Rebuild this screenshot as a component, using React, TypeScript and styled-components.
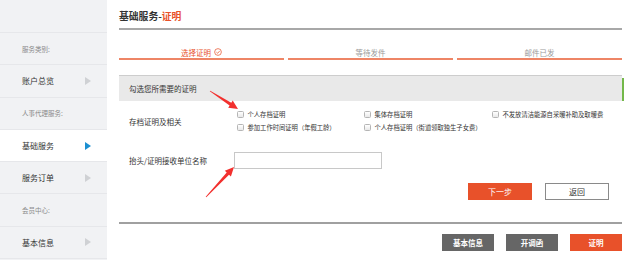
import React from "react";
import styled, { createGlobalStyle } from "styled-components";

const Global = createGlobalStyle`
  html, body { margin: 0; padding: 0; background: #fff; }
  body { font-family: "Noto Sans CJK SC", "Noto Sans", sans-serif; color: #333; }
  * { box-sizing: border-box; }
`;

const Page = styled.div`
  display: flex;
  width: 624px;
  height: 260px;
  overflow: hidden;
  position: relative;
`;

const Sidebar = styled.nav`
  width: 107px;
  flex: none;
  background: #f1f2f4;
  display: flex;
  flex-direction: column;
`;

const SideTop = styled.div`
  height: 33px;
  border-bottom: 1px solid #e6e7ea;
`;

const SideRow = styled.div<{ $active?: boolean; $section?: boolean }>`
  height: 32.3px;
  display: flex;
  align-items: center;
  justify-content: space-between;
  padding: 0 16px 0 22px;
  border-bottom: 1px solid #e6e7ea;
  background: ${(p) => (p.$active ? "#fff" : "transparent")};
  font-size: ${(p) => (p.$section ? "6.5px" : "8px")};
  color: ${(p) => (p.$section ? "#8a8a8a" : "#333")};
`;

const Tri = styled.span<{ $active?: boolean }>`
  width: 0;
  height: 0;
  border-top: 4px solid transparent;
  border-bottom: 4px solid transparent;
  border-left: 6px solid ${(p) => (p.$active ? "#1b8fd1" : "#cfd1d4")};
`;

const Main = styled.main`
  flex: 1;
  padding: 0 2px 0 12px;
  display: flex;
  flex-direction: column;
`;

const Header = styled.div`
  height: 30px;
  border-bottom: 2px solid #a8a8a8;
  display: flex;
  align-items: center;
  padding-top: 4px;
`;

const Title = styled.h1`
  margin: 0;
  font-size: 9.8px;
  font-weight: 700;
  color: #333;
  span { color: #e8512a; }
`;

const Steps = styled.div`
  display: grid;
  grid-template-columns: repeat(3, 1fr);
  column-gap: 4px;
  margin-top: 16px;
`;

const Step = styled.div<{ $active?: boolean }>`
  height: 14px;
  border-bottom: 2px solid #ee8566;
  display: flex;
  justify-content: center;
  align-items: center;
  gap: 3px;
  font-size: 7.5px;
  color: ${(p) => (p.$active ? "#e8512a" : "#9a9a9a")};
`;

const Check = styled.svg`
  width: 8px;
  height: 8px;
`;

const Bar = styled.div`
  margin-top: 15px;
  height: 26px;
  background: #e9e9e9;
  border-top: 1px solid #cdcdcd;
  display: flex;
  align-items: center;
  padding-left: 10px;
  font-size: 7.5px;
  color: #333;
  position: relative;
`;

const GreenEdge = styled.div`
  position: absolute;
  right: -2px;
  top: 2px;
  bottom: 0;
  width: 2px;
  background: #73b84a;
`;

const Form = styled.div`
  display: grid;
  grid-template-columns: 105px 1fr;
  padding-left: 10px;
  margin-top: 9px;
  row-gap: 20px;
  align-items: center;
`;

const Label = styled.div`
  font-size: 7.5px;
  color: #333;
`;

const Options = styled.div`
  display: grid;
  grid-template-columns: 127px 128px 1fr;
  row-gap: 4px;
  padding-left: 3px;
`;

const Opt = styled.label`
  display: flex;
  align-items: center;
  gap: 2px;
  font-size: 6.3px;
  color: #333;
  height: 9px;
  white-space: nowrap;
`;

const Box = styled.span`
  width: 7px;
  height: 7px;
  border: 1px solid #b5b5b5;
  border-radius: 1.5px;
  background: linear-gradient(#fff, #e9e9e9);
  flex: none;
  margin-right: 1.5px;
`;

const Input = styled.div`
  width: 148px;
  height: 17px;
  border: 1px solid #c8c8c8;
  background: #fff;
`;

const Actions = styled.div`
  display: flex;
  justify-content: flex-end;
  gap: 13px;
  margin-top: 14px;
  padding-right: 13px;
`;

const Btn = styled.button<{ $kind: "primary" | "outline" | "dark" }>`
  height: 17px;
  padding: 0;
  font-family: inherit;
  font-size: 8px;
  border: 1px solid
    ${(p) => (p.$kind === "primary" ? "#e8512a" : p.$kind === "dark" ? "#666" : "#8a8a8a")};
  background: ${(p) => (p.$kind === "primary" ? "#e8512a" : p.$kind === "dark" ? "#666" : "#fff")};
  color: ${(p) => (p.$kind === "outline" ? "#333" : "#fff")};
  display: flex;
  align-items: center;
  justify-content: center;
`;

const WideBtn = styled(Btn)`
  width: 64px;
`;

const FootBtn = styled(Btn)`
  width: 52px;
  font-size: 7.5px;
  font-weight: 700;
`;

const Footer = styled.div`
  margin-top: 22px;
  border-top: 2px solid #a0a0a0;
  display: flex;
  justify-content: flex-end;
  gap: 12px;
  padding-top: 10px;
`;

const Overlay = styled.svg`
  position: absolute;
  left: 0;
  top: 0;
  width: 624px;
  height: 260px;
  pointer-events: none;
`;

function arrow(tx: number, ty: number, hx: number, hy: number) {
  const dx = hx - tx;
  const dy = hy - ty;
  const L = Math.hypot(dx, dy);
  const ux = dx / L;
  const uy = dy / L;
  const nx = -uy;
  const ny = ux;
  const bx = hx - ux * 9;
  const by = hy - uy * 9;
  const pts: [number, number][] = [
    [tx + nx * 0.4, ty + ny * 0.4],
    [bx + nx * 1.6, by + ny * 1.6],
    [bx + nx * 4.2, by + ny * 4.2],
    [hx, hy],
    [bx - nx * 4.2, by - ny * 4.2],
    [bx - nx * 1.6, by - ny * 1.6],
    [tx - nx * 0.4, ty - ny * 0.4],
  ];
  return pts.map((p) => p.map((v) => v.toFixed(1)).join(",")).join(" ");
}

export default function App() {
  return (
    <Page>
      <Global />
      <Sidebar>
        <SideTop />
        <SideRow $section>服务类别:</SideRow>
        <SideRow>
          账户总览<Tri />
        </SideRow>
        <SideRow $section>人事代理服务:</SideRow>
        <SideRow $active>
          基础服务<Tri $active />
        </SideRow>
        <SideRow>
          服务订单<Tri />
        </SideRow>
        <SideRow $section>会员中心:</SideRow>
        <SideRow>
          基本信息<Tri />
        </SideRow>
      </Sidebar>
      <Main>
        <Header>
          <Title>
            基础服务-<span>证明</span>
          </Title>
        </Header>
        <Steps>
          <Step $active>
            选择证明
            <Check viewBox="0 0 10 10">
              <circle cx="5" cy="5" r="4.2" fill="none" stroke="#e8512a" strokeWidth="0.9" />
              <path d="M3 5.2 L4.6 6.6 L7.2 3.6" fill="none" stroke="#e8512a" strokeWidth="0.9" />
            </Check>
          </Step>
          <Step>等待发件</Step>
          <Step>邮件已发</Step>
        </Steps>
        <Bar>
          勾选您所需要的证明
          <GreenEdge />
        </Bar>
        <Form>
          <Label>存档证明及相关</Label>
          <Options>
            <Opt>
              <Box />
              个人存档证明
            </Opt>
            <Opt>
              <Box />
              集体存档证明
            </Opt>
            <Opt>
              <Box />
              不发放清洁能源自采暖补助及取暖费
            </Opt>
            <Opt>
              <Box />
              参加工作时间证明（年假工龄）
            </Opt>
            <Opt>
              <Box />
              个人存档证明（街道领取独生子女费）
            </Opt>
          </Options>
          <Label>抬头/证明接收单位名称</Label>
          <Input />
        </Form>
        <Actions>
          <WideBtn $kind="primary">下一步</WideBtn>
          <WideBtn $kind="outline">返回</WideBtn>
        </Actions>
        <Footer>
          <FootBtn $kind="dark">基本信息</FootBtn>
          <FootBtn $kind="dark">开调函</FootBtn>
          <FootBtn $kind="primary">证明</FootBtn>
        </Footer>
      </Main>
      <Overlay viewBox="0 0 624 260">
        <polygon points={arrow(210, 91, 238, 109)} fill="#f2302e" />
        <polygon points={arrow(206, 197, 234, 167)} fill="#f2302e" />
      </Overlay>
    </Page>
  );
}
